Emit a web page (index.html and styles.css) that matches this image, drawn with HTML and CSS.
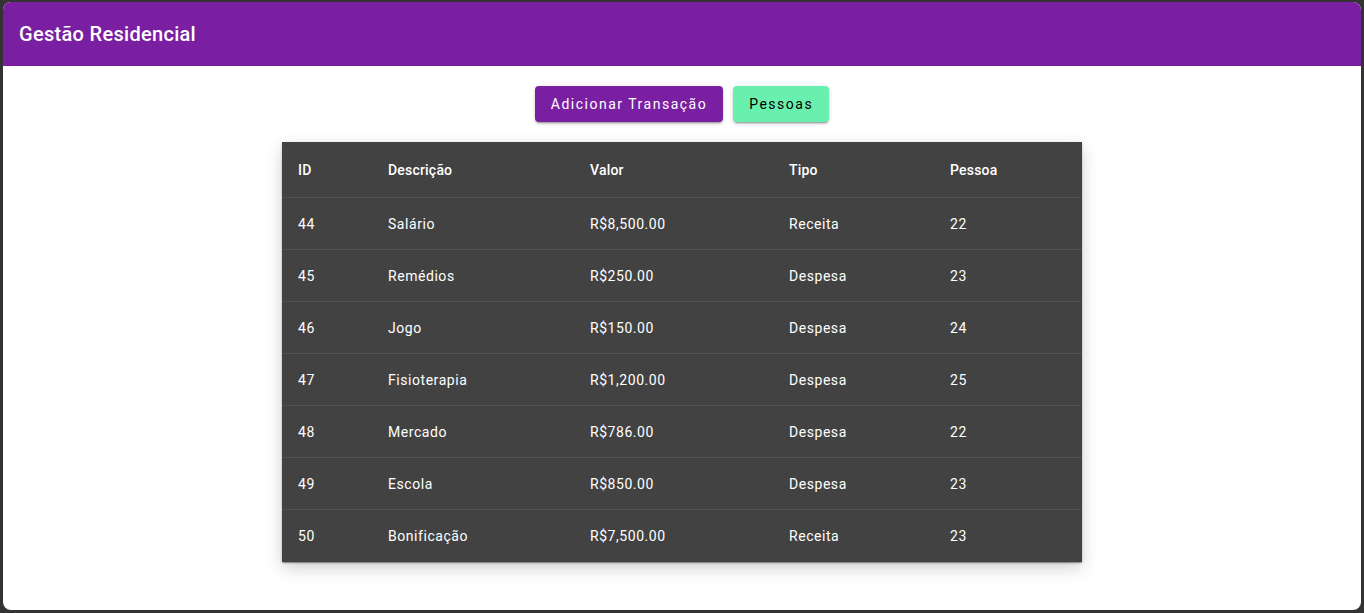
FILE: index.html
```html
<!DOCTYPE html>
<html lang="pt-BR">
<head>
<meta charset="utf-8">
<title>Gestão Residencial</title>
<link rel="stylesheet" href="styles.css">
</head>
<body>
<div class="app">
  <header class="appbar">
    <h1 class="title">Gestão Residencial</h1>
  </header>
  <main class="content">
    <div class="actions">
      <button class="btn btn-primary">Adicionar Transação</button>
      <button class="btn btn-green">Pessoas</button>
    </div>
    <div class="table-paper">
      <table class="table">
        <colgroup>
          <col class="c-id"><col class="c-desc"><col class="c-val"><col class="c-tipo"><col class="c-pessoa">
        </colgroup>
        <thead>
          <tr><th>ID</th><th>Descrição</th><th>Valor</th><th>Tipo</th><th>Pessoa</th></tr>
        </thead>
        <tbody>
          <tr><td>44</td><td>Salário</td><td>R$8,500.00</td><td>Receita</td><td>22</td></tr>
          <tr><td>45</td><td>Remédios</td><td>R$250.00</td><td>Despesa</td><td>23</td></tr>
          <tr><td>46</td><td>Jogo</td><td>R$150.00</td><td>Despesa</td><td>24</td></tr>
          <tr><td>47</td><td>Fisioterapia</td><td>R$1,200.00</td><td>Despesa</td><td>25</td></tr>
          <tr><td>48</td><td>Mercado</td><td>R$786.00</td><td>Despesa</td><td>22</td></tr>
          <tr><td>49</td><td>Escola</td><td>R$850.00</td><td>Despesa</td><td>23</td></tr>
          <tr><td>50</td><td>Bonificação</td><td>R$7,500.00</td><td>Receita</td><td>23</td></tr>
        </tbody>
      </table>
    </div>
  </main>
</div>
</body>
</html>
```
FILE: styles.css
```css
html, body {
  margin: 0;
  padding: 0;
  height: 100%;
}
body {
  background: #333333;
  font-family: Roboto, "Liberation Sans", sans-serif;
  padding: 2px 3px 3px 3px;
  box-sizing: border-box;
}
.app {
  height: 100%;
  background: #ffffff;
  border-radius: 8px;
  overflow: hidden;
}
.appbar {
  height: 64px;
  background: #7b1fa2;
  display: flex;
  align-items: center;
  padding: 0 16px;
}
.title {
  margin: 0;
  font-size: 20px;
  font-weight: 500;
  color: #ffffff;
  letter-spacing: 0.3px;
  line-height: 1.6;
}
.content {
  padding-top: 20px;
  display: flex;
  flex-direction: column;
  align-items: center;
}
.actions {
  display: flex;
  gap: 10px;
  margin-bottom: 20px;
}
.btn {
  height: 36px;
  border: none;
  border-radius: 4px;
  padding: 0 16px;
  font-family: Roboto, "Liberation Sans", sans-serif;
  font-size: 14px;
  font-weight: 400;
  letter-spacing: 1.5px;
  cursor: pointer;
  box-shadow: 0 3px 1px -2px rgba(0,0,0,0.2), 0 2px 2px 0 rgba(0,0,0,0.14), 0 1px 5px 0 rgba(0,0,0,0.12);
}
.btn-primary {
  background: #7b1fa2;
  color: #ffffff;
}
.btn-green {
  background: #69f0ae;
  color: #000000;
}
.table-paper {
  width: 800px;
  background: #424242;
  box-shadow: 0 2px 1px -1px rgba(0,0,0,0.2), 0 1px 1px 0 rgba(0,0,0,0.14), 0 1px 3px 0 rgba(0,0,0,0.12), 0 6px 16px rgba(0,0,0,0.18);
}
.table {
  width: 100%;
  border-collapse: collapse;
  table-layout: fixed;
  color: #ffffff;
  font-size: 14px;
}
.c-id { width: 90px; }
.c-desc { width: 202px; }
.c-val { width: 199px; }
.c-tipo { width: 161px; }
.c-pessoa { width: 148px; }
.table th, .table td {
  text-align: left;
  padding: 0 16px;
  border-bottom: 1px solid #515151;
}
.table th {
  height: 55px;
  font-weight: 500;
  letter-spacing: 0.2px;
}
.table td {
  height: 51px;
  font-weight: 400;
  letter-spacing: 0.55px;
}
.table tbody tr:last-child td {
  border-bottom: none;
  height: 52px;
}
```
